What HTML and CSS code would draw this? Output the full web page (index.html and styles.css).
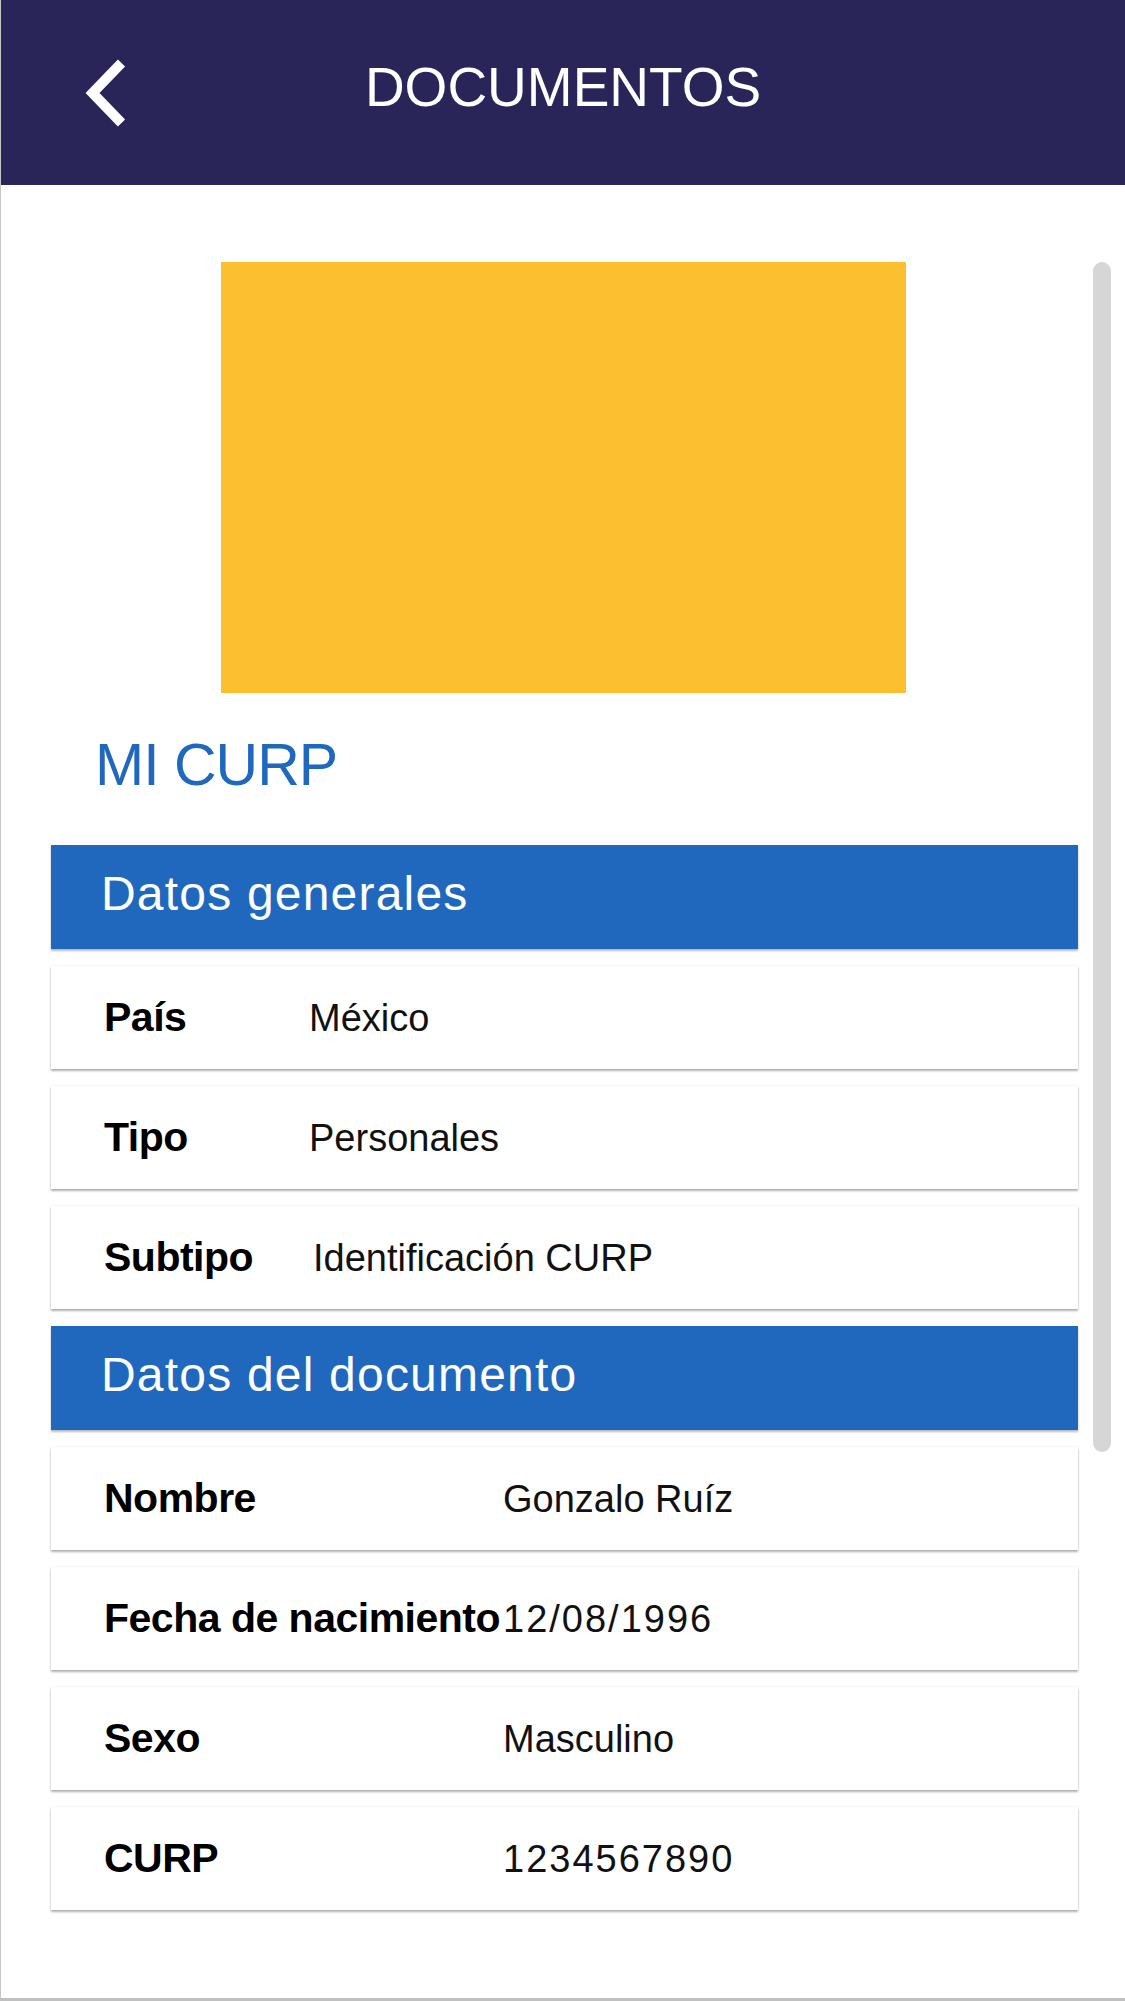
FILE: index.html
```html
<!DOCTYPE html>
<html lang="es">
<head>
<meta charset="utf-8">
<title>Documentos</title>
<link rel="stylesheet" href="styles.css">
</head>
<body>
<div class="screen">
  <header class="topbar">
    <button class="back" aria-label="Regresar">
      <svg width="50" height="80" viewBox="0 0 50 80" aria-hidden="true">
        <polyline points="41.5,10 12.5,40 41.5,70" fill="none" stroke="#ffffff" stroke-width="10" stroke-linejoin="miter" stroke-linecap="butt"/>
      </svg>
    </button>
    <h1 class="topbar-title">DOCUMENTOS</h1>
    <span class="topbar-spacer"></span>
  </header>

  <main class="content">
    <div class="scrollbar"></div>
    <div class="doc-image"></div>
    <h2 class="doc-title">MI CURP</h2>

    <section class="group group--general">
      <div class="group-head">Datos generales</div>
      <div class="row"><span class="label">País</span><span class="value">México</span></div>
      <div class="row"><span class="label">Tipo</span><span class="value">Personales</span></div>
      <div class="row"><span class="label">Subtipo</span><span class="value value--shift">Identificación CURP</span></div>
    </section>

    <section class="group group--document">
      <div class="group-head">Datos del documento</div>
      <div class="row"><span class="label">Nombre</span><span class="value">Gonzalo Ruíz</span></div>
      <div class="row"><span class="label">Fecha de nacimiento</span><span class="value num">12/08/1996</span></div>
      <div class="row"><span class="label">Sexo</span><span class="value">Masculino</span></div>
      <div class="row"><span class="label">CURP</span><span class="value num">1234567890</span></div>
    </section>
  </main>
</div>
</body>
</html>
```

FILE: styles.css
```css
* {
  box-sizing: border-box;
}

html, body {
  margin: 0;
  padding: 0;
  background: #ffffff;
}

body {
  font-family: "Liberation Sans", Arial, sans-serif;
  color: #000;
}

.screen {
  width: 1125px;
  height: 2001px;
  border-left: 1px solid #c6c6c6;
  border-bottom: 3px solid #c0c0c0;
  overflow: hidden;
  background: #ffffff;
}

/* Top bar */
.topbar {
  height: 185px;
  background: #2a2559;
  display: grid;
  grid-template-columns: 1fr auto 1fr;
  align-items: center;
}

.back {
  justify-self: start;
  margin: 0 0 0 79px;
  padding: 0;
  width: 50px;
  height: 80px;
  border: 0;
  background: transparent;
  display: block;
}

.back svg {
  display: block;
}

.topbar-title {
  margin: 0 0 10px 0;
  font-size: 55px;
  line-height: 1;
  font-weight: normal;
  color: #ffffff;
  letter-spacing: 0;
}

/* Content */
.content {
  position: relative;
  height: 1813px;
  padding-top: 77px;
}

.scrollbar {
  position: absolute;
  top: 77px;
  right: 14px;
  width: 18px;
  height: 1190px;
  border-radius: 9px;
  background: #d6d6d6;
}

.doc-image {
  width: 685px;
  height: 431px;
  margin: 0 auto;
  background: #fbbf2f;
}

.doc-title {
  margin: 43px 0 0 94px;
  font-size: 59px;
  line-height: 1;
  font-weight: normal;
  letter-spacing: -1px;
  color: #1f68bd;
}

.group {
  margin: 50px 47px 0 50px;
  display: flex;
  flex-direction: column;
  gap: 17px;
}

.group + .group {
  margin-top: 17px;
}

.group--general {
  --label-w: 205px;
}

.group--document {
  --label-w: 399px;
}

.group-head {
  height: 104px;
  padding: 0 0 6px 50px;
  display: flex;
  align-items: center;
  background: #1f68bd;
  color: #ffffff;
  font-size: 48px;
  line-height: 1;
  letter-spacing: 1.2px;
  box-shadow: 0 2px 2px rgba(0, 0, 0, 0.28);
}

.row {
  height: 103px;
  padding-left: 53px;
  display: grid;
  grid-template-columns: var(--label-w) 1fr;
  align-items: center;
  background: #ffffff;
  box-shadow: 0 2px 2px rgba(0, 0, 0, 0.30), 0 0 2px rgba(0, 0, 0, 0.10);
}

.label {
  font-size: 41px;
  line-height: 1;
  font-weight: bold;
  letter-spacing: -0.5px;
  white-space: nowrap;
  color: #000;
}

.value {
  font-size: 38px;
  line-height: 1;
  white-space: nowrap;
  color: #111;
}

.value--shift {
  padding-left: 4px;
}

.num {
  letter-spacing: 2px;
}
```
